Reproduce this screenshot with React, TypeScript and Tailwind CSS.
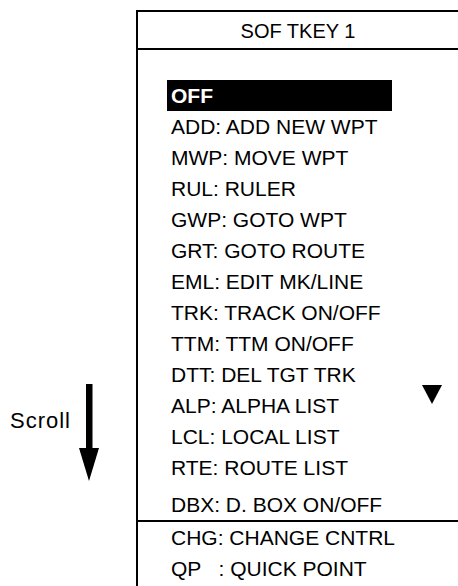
import React from "react";

const items = [
  "ADD: ADD NEW WPT",
  "MWP: MOVE WPT",
  "RUL: RULER",
  "GWP: GOTO WPT",
  "GRT: GOTO ROUTE",
  "EML: EDIT MK/LINE",
  "TRK: TRACK ON/OFF",
  "TTM: TTM ON/OFF",
  "DTT: DEL TGT TRK",
  "ALP: ALPHA LIST",
  "LCL: LOCAL LIST",
  "RTE: ROUTE LIST",
];

export default function App() {
  return (
    <div className="w-[458px] h-[586px] overflow-hidden bg-white flex text-black font-['Liberation_Sans',Arial,Helvetica,sans-serif]">
      <div className="w-[136px] shrink-0 flex items-start pt-[384px]">
        <div className="w-[79px] pl-[10px] mt-[26px] text-[22px] leading-none tracking-[1px]">
          Scroll
        </div>
        <svg width="20" height="97" viewBox="0 0 20 97" className="block">
          <rect x="7" y="0" width="6.5" height="66" fill="#000" />
          <polygon points="0,64 20,64 10,97" fill="#000" />
        </svg>
      </div>
      <div className="flex-1 mt-[10px] border-l-2 border-t-2 border-black flex flex-col min-w-0">
        <div className="h-[38px] pt-[1px] border-b-2 border-black flex items-center justify-center text-[20px] leading-none">
          SOF TKEY 1
        </div>
        <div className="flex pt-[30px] pl-[29px]">
          <div className="w-[225px] shrink-0 flex flex-col text-[21px] leading-[31px] whitespace-nowrap">
            <div className="pl-[4px] bg-black text-white font-bold">OFF</div>
            {items.map((t) => (
              <div key={t} className="pl-[4px]">
                {t}
              </div>
            ))}
            <div className="pl-[4px] mt-[6px]">DBX: D. BOX ON/OFF</div>
          </div>
          <div className="pl-[30px] pt-[305px]">
            <svg width="20" height="19" viewBox="0 0 20 19" className="block">
              <polygon points="0,0 20,0 10,19" fill="#000" />
            </svg>
          </div>
        </div>
        <div className="border-t-2 border-black pl-[33px] text-[21px] leading-[31px] whitespace-pre">
          <div>CHG: CHANGE CNTRL</div>
          <div>{"QP   : QUICK POINT"}</div>
        </div>
      </div>
    </div>
  );
}
